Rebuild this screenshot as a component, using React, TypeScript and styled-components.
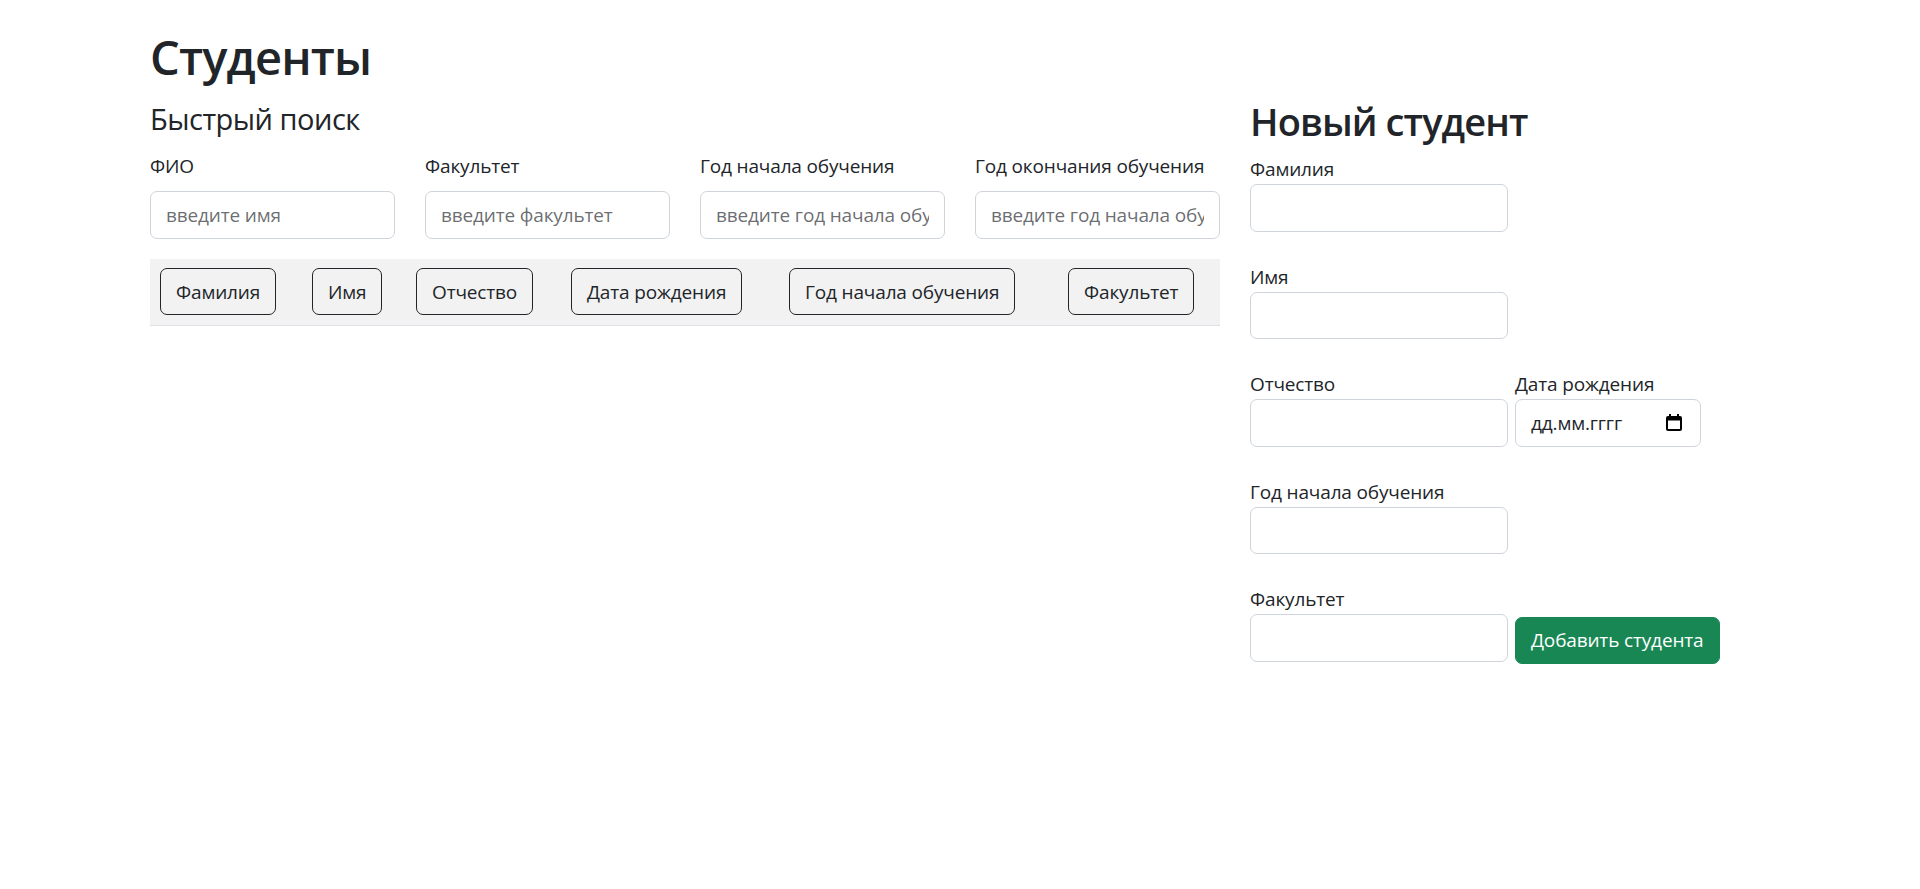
import React from "react";
import styled, { createGlobalStyle } from "styled-components";

const GlobalStyle = createGlobalStyle`
    * { box-sizing: border-box; }
    body {
        margin: 0;
        background: #fff;
        color: #212529;
        font-family: "Open Sans", "Noto Sans", sans-serif;
        font-size: 19px;
        line-height: 30px;
        letter-spacing: -0.15px;
    }
`;

const Container = styled.div`
    max-width: 1650px;
    margin: 0 auto;
    padding: 0 15px;
`;

const Title = styled.h1`
    margin: 27px 0 10px;
    font-size: 47px;
    line-height: 60px;
    font-weight: 600;
    letter-spacing: -0.8px;
`;

const Row = styled.div`
    display: grid;
    grid-template-columns: 1070px 520px;
    column-gap: 30px;
    align-items: start;
`;

const SearchTitle = styled.h4`
    margin: 4px 0 14px;
    font-size: 29px;
    line-height: 36px;
    font-weight: 400;
    letter-spacing: -0.5px;
`;

const SearchGrid = styled.div`
    display: grid;
    grid-template-columns: repeat(4, 245px);
    column-gap: 30px;
`;

const Field = styled.div`
    display: flex;
    flex-direction: column;
`;

const SearchLabel = styled.label`
    margin-bottom: 10px;
`;

const Input = styled.input<{ $w?: number }>`
    width: ${({ $w }) => ($w ? `${$w}px` : "100%")};
    height: 47.5px;
    padding: 0 15px;
    font: inherit;
    letter-spacing: inherit;
    color: #212529;
    background: #fff;
    border: 1px solid #ced4da;
    border-radius: 7px;
    outline: none;

    &::placeholder {
        color: rgba(33, 37, 41, 0.68);
    }
`;

const Table = styled.table`
    width: 100%;
    margin-top: 20px;
    border-collapse: collapse;
`;

const HeadRow = styled.tr`
    background: #f2f2f2;
    border-bottom: 1px solid #dee2e6;
`;

const HeadCell = styled.th<{ $w: number }>`
    width: ${({ $w }) => $w}px;
    padding: 9.5px 10px;
    text-align: left;
    font-weight: 400;
`;

const SortButton = styled.button`
    height: 47px;
    padding: 0 15px;
    font: inherit;
    letter-spacing: inherit;
    color: #212529;
    background: transparent;
    border: 1px solid #212529;
    border-radius: 7px;
    white-space: nowrap;
`;

const FormTitle = styled.h2`
    margin: 0 0 9px;
    font-size: 38px;
    line-height: 48px;
    font-weight: 600;
    letter-spacing: -0.9px;
`;

const FormRow = styled.div`
    display: flex;
    align-items: flex-start;
    gap: 7.5px;
    margin-bottom: 30px;
`;

const DateBox = styled.div`
    width: 186px;
    height: 47.5px;
    padding: 0 18px 0 15px;
    display: flex;
    align-items: center;
    justify-content: space-between;
    border: 1px solid #ced4da;
    border-radius: 7px;
`;

const SubmitButton = styled.button`
    margin-top: 32.5px;
    height: 47.5px;
    padding: 0 15px;
    font: inherit;
    letter-spacing: inherit;
    color: #fff;
    background: #198754;
    border: 1px solid #198754;
    border-radius: 7px;
`;

const CalendarIcon = () => (
    <svg width="16" height="17" viewBox="0 0 16 17">
        <path
            fillRule="evenodd"
            d="M3 0h2v2h6V0h2v2h1a2 2 0 0 1 2 2v11a2 2 0 0 1-2 2H2a2 2 0 0 1-2-2V4a2 2 0 0 1 2-2h1zM2 6.5v8.5h12V6.5z"
            fill="#000"
        />
    </svg>
);

const searchFields = [
    { label: "ФИО", placeholder: "введите имя" },
    { label: "Факультет", placeholder: "введите факультет" },
    { label: "Год начала обучения", placeholder: "введите год начала обучения" },
    { label: "Год окончания обучения", placeholder: "введите год начала обучения" },
];

const columns = [
    { title: "Фамилия", w: 152 },
    { title: "Имя", w: 104 },
    { title: "Отчество", w: 155 },
    { title: "Дата рождения", w: 218 },
    { title: "Год начала обучения", w: 279 },
    { title: "Факультет", w: 162 },
];

export default function App() {
    return (
        <Container>
            <GlobalStyle />
            <Title>Студенты</Title>
            <Row>
                <div>
                    <SearchTitle>Быстрый поиск</SearchTitle>
                    <SearchGrid>
                        {searchFields.map((f) => (
                            <Field key={f.label}>
                                <SearchLabel>{f.label}</SearchLabel>
                                <Input placeholder={f.placeholder} />
                            </Field>
                        ))}
                    </SearchGrid>
                    <Table>
                        <thead>
                            <HeadRow>
                                {columns.map((c) => (
                                    <HeadCell key={c.title} $w={c.w}>
                                        <SortButton>{c.title}</SortButton>
                                    </HeadCell>
                                ))}
                            </HeadRow>
                        </thead>
                        <tbody />
                    </Table>
                </div>
                <div>
                    <FormTitle>Новый студент</FormTitle>
                    <FormRow>
                        <Field>
                            <label>Фамилия</label>
                            <Input $w={257.5} />
                        </Field>
                    </FormRow>
                    <FormRow>
                        <Field>
                            <label>Имя</label>
                            <Input $w={257.5} />
                        </Field>
                    </FormRow>
                    <FormRow>
                        <Field>
                            <label>Отчество</label>
                            <Input $w={257.5} />
                        </Field>
                        <Field>
                            <label>Дата рождения</label>
                            <DateBox>
                                <span>дд.мм.гггг</span>
                                <CalendarIcon />
                            </DateBox>
                        </Field>
                    </FormRow>
                    <FormRow>
                        <Field>
                            <label>Год начала обучения</label>
                            <Input $w={257.5} />
                        </Field>
                    </FormRow>
                    <FormRow>
                        <Field>
                            <label>Факультет</label>
                            <Input $w={257.5} />
                        </Field>
                        <SubmitButton>Добавить студента</SubmitButton>
                    </FormRow>
                </div>
            </Row>
        </Container>
    );
}
